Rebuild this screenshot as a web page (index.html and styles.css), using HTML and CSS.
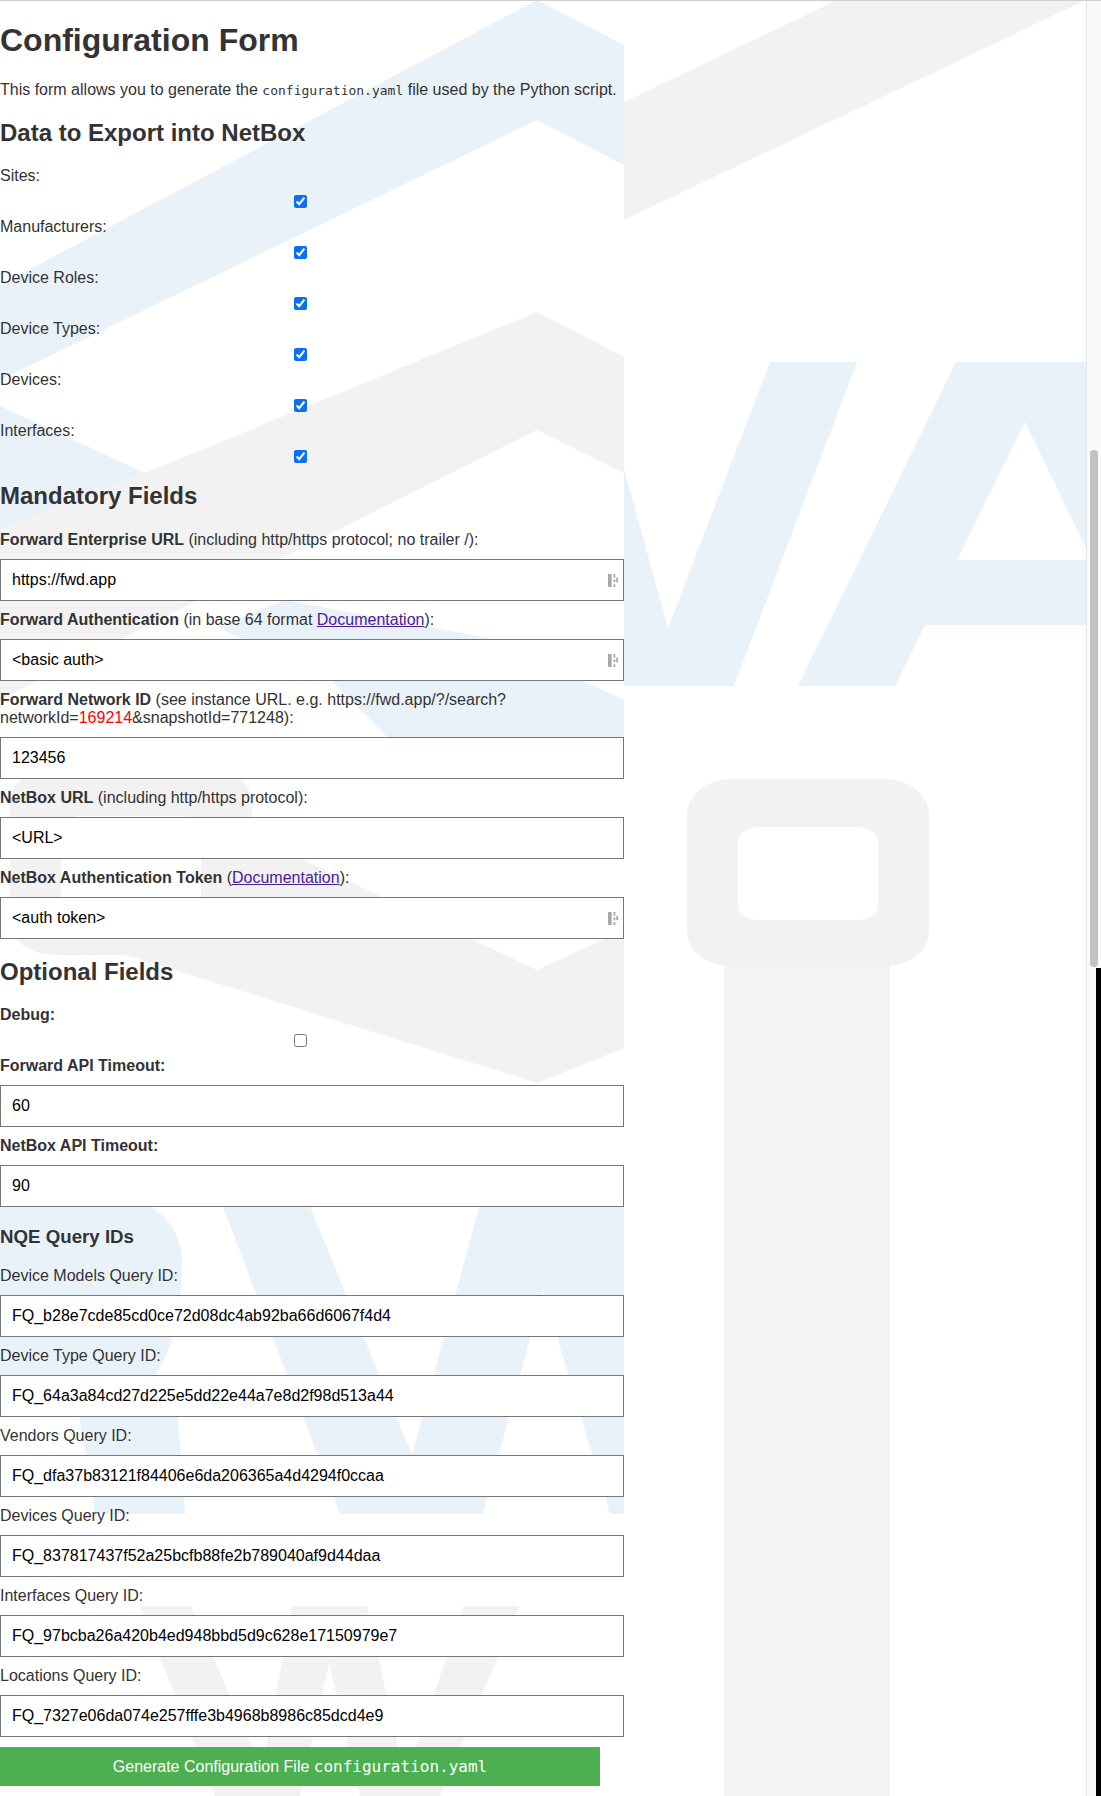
FILE: index.html
```html
<!DOCTYPE html>
<html lang="en">

<head>
    <meta charset="UTF-8" />
    <meta name="viewport" content="width=device-width, initial-scale=1.0" />
    <title>Configuration Form</title>
    <link rel="stylesheet" href="styles.css">
</head>

<body>
    <svg class="watermark" width="1086" height="1796" viewBox="0 0 1086 1796">
        <!-- page background logo -->
        <polygon fill="#f2f2f2" points="624,102 837,0 1086,0 624,220" />
        <polygon fill="#f4f4f4" points="724,960 890,960 890,1796 724,1796" />
        <rect fill="#f2f2f2" x="687" y="779" width="242" height="187" rx="43" ry="35" />
        <rect fill="#fff" x="738" y="827" width="140" height="93" rx="20" ry="15" />
        <g fill="#eaf2f9">
            <polygon points="624,469 668,628 770,362 857,362 734,686 624,686" />
            <path fill-rule="evenodd" d="M956 362 H1086 V625 H925 L895 686 H798 Z M1025 422 L957 560 H1086 V548 Z" />
        </g>
        <!-- form background logo -->
        <g fill="#eaf2f9">
            <polygon points="537,0 624,45 624,165 537,120 0,380 0,285" />
            <polygon points="0,406 145,473 0,530" />
            <polygon points="217,627 285,600 493,639 624,700 624,760 410,760 333,682" />
            <path d="M0 1207 H150 Q182 1225 182 1262 Q182 1335 156 1374 L140 1395 L178 1416 L185 1514 H95 L79 1416 L60 1390 H0 Z" />
            <polygon points="223,1207 310,1207 412,1455 479,1207 624,1207 624,1514 610,1514 543,1290 483,1514 340,1514" />
        </g>
        <g fill="#f2f2f2">
            <polygon points="537,312 624,357 624,473 537,430 0,700 0,530 145,473" />
            <rect x="10" y="768" width="242" height="187" rx="43" ry="35" />
            <polygon points="624,930 537,970 240,830 220,925 110,950 537,1083 624,1048" />
            <polygon points="140,1606 191,1606 262,1770 292,1606 367,1606 405,1779 464,1606 519,1606 440,1796 360,1796 329,1663 300,1796 215,1796" />
        </g>
        <rect fill="#fff" x="61" y="816" width="140" height="93" rx="20" ry="15" />
    </svg>

    <main class="page">
        <h1>Configuration Form</h1>
        <p class="intro">This form allows you to generate the <code>configuration.yaml</code> file used by the Python script.</p>

        <form>
            <h2>Data to Export into NetBox</h2>
            <div class="check-row"><label>Sites:</label><input type="checkbox" checked /></div>
            <div class="check-row"><label>Manufacturers:</label><input type="checkbox" checked /></div>
            <div class="check-row"><label>Device Roles:</label><input type="checkbox" checked /></div>
            <div class="check-row"><label>Device Types:</label><input type="checkbox" checked /></div>
            <div class="check-row"><label>Devices:</label><input type="checkbox" checked /></div>
            <div class="check-row last"><label>Interfaces:</label><input type="checkbox" checked /></div>

            <h2 class="section">Mandatory Fields</h2>
            <label><strong>Forward Enterprise URL</strong> (including http/https protocol; no trailer /):</label>
            <div class="field">
                <input type="text" value="https://fwd.app" />
                <svg class="key" viewBox="0 0 12 16"><path d="M0 1h4v14H0zM6 1h2v4H6zM6 7h2v3H6zM6 12h2v3H6zM9 5h2v5H9z" /></svg>
            </div>
            <label><strong>Forward Authentication</strong> (in base 64 format <a href="#">Documentation</a>):</label>
            <div class="field">
                <input type="text" value="&lt;basic auth&gt;" />
                <svg class="key" viewBox="0 0 12 16"><path d="M0 1h4v14H0zM6 1h2v4H6zM6 7h2v3H6zM6 12h2v3H6zM9 5h2v5H9z" /></svg>
            </div>
            <label><strong>Forward Network ID</strong> (see instance URL. e.g. https://fwd.app/?/search?<br/>networkId=<span class="red">169214</span>&amp;snapshotId=771248):</label>
            <div class="field"><input type="text" value="123456" /></div>
            <label><strong>NetBox URL</strong> (including http/https protocol):</label>
            <div class="field"><input type="text" value="&lt;URL&gt;" /></div>
            <label><strong>NetBox Authentication Token</strong> (<a href="#">Documentation</a>):</label>
            <div class="field">
                <input type="text" value="&lt;auth token&gt;" />
                <svg class="key" viewBox="0 0 12 16"><path d="M0 1h4v14H0zM6 1h2v4H6zM6 7h2v3H6zM6 12h2v3H6zM9 5h2v5H9z" /></svg>
            </div>

            <h2 class="section">Optional Fields</h2>
            <div class="check-row debug"><label><strong>Debug:</strong></label><input type="checkbox" /></div>
            <label><strong>Forward API Timeout:</strong></label>
            <div class="field"><input type="text" value="60" /></div>
            <label><strong>NetBox API Timeout:</strong></label>
            <div class="field"><input type="text" value="90" /></div>

            <h3>NQE Query IDs</h3>
            <label>Device Models Query ID:</label>
            <div class="field"><input type="text" value="FQ_b28e7cde85cd0ce72d08dc4ab92ba66d6067f4d4" /></div>
            <label>Device Type Query ID:</label>
            <div class="field"><input type="text" value="FQ_64a3a84cd27d225e5dd22e44a7e8d2f98d513a44" /></div>
            <label>Vendors Query ID:</label>
            <div class="field"><input type="text" value="FQ_dfa37b83121f84406e6da206365a4d4294f0ccaa" /></div>
            <label>Devices Query ID:</label>
            <div class="field"><input type="text" value="FQ_837817437f52a25bcfb88fe2b789040af9d44daa" /></div>
            <label>Interfaces Query ID:</label>
            <div class="field"><input type="text" value="FQ_97bcba26a420b4ed948bbd5d9c628e17150979e7" /></div>
            <label>Locations Query ID:</label>
            <div class="field"><input type="text" value="FQ_7327e06da074e257fffe3b4968b8986c85dcd4e9" /></div>

            <button type="submit">Generate Configuration File <code>configuration.yaml</code></button>
        </form>
    </main>

    <div class="scrollbar">
        <div class="thumb"></div>
        <div class="thumb-end"></div>
    </div>
</body>

</html>
```
FILE: styles.css
```css
/* Page */

html,
body {
    height: 1796px;
    overflow: hidden;
}

body {
    font-family: "Liberation Sans", Arial, sans-serif;
    background: #fff;
    color: #333;
    margin: 0;
    border-top: 1px solid #d0d0d0;
    box-sizing: border-box;
    position: relative;
}

.watermark {
    position: absolute;
    top: -1px;
    left: 0;
}

.page {
    position: relative;
    width: 624px;
}
/* Headings */

h1 {
    font-size: 32px;
    line-height: 37px;
    margin: 21px 0 0;
}

.intro {
    font-size: 16px;
    line-height: 18px;
    margin: 22px 0 0;
}

code {
    font-family: "DejaVu Sans Mono", monospace;
    font-size: 13px;
}

h2 {
    font-size: 24px;
    line-height: 28px;
    margin: 19px 0 20px;
}

h2.section {
    margin: 19px 0 21px;
}

h3 {
    font-size: 18.7px;
    line-height: 22px;
    margin: 19px 0;
}
/* Form layout */

label {
    display: block;
    font-size: 16px;
    line-height: 18px;
    margin-bottom: 10px;
}

.check-row {
    margin-bottom: 10px;
}

.check-row.last {
    margin-bottom: 0;
}

.check-row.debug {
    margin-top: -1px;
}

.check-row input {
    display: block;
    width: 13px;
    height: 13px;
    margin: 0 0 0 294px;
    accent-color: #0b6ff5;
}

.field {
    position: relative;
    margin-bottom: 10px;
}

input[type="text"] {
    display: block;
    width: 100%;
    height: 42px;
    padding: 0 11px;
    background: #fff;
    border: 1px solid #767676;
    box-sizing: border-box;
    font-family: "Liberation Sans", Arial, sans-serif;
    font-size: 16px;
    color: #000;
}

.key {
    position: absolute;
    right: 5px;
    top: 14px;
    width: 11px;
    height: 15px;
    fill: #a8a8a8;
}

.red {
    color: #f00;
}

a {
    color: #4b1c96;
}
/* Submit button */

button[type="submit"] {
    display: block;
    width: 600px;
    height: 39px;
    margin-top: 1px;
    background: #4caf50;
    color: #fff;
    border: none;
    font-family: "Liberation Sans", Arial, sans-serif;
    font-size: 16px;
}

button code {
    font-size: 16px;
}
/* Scrollbar */

.scrollbar {
    position: absolute;
    top: 0;
    right: 0;
    width: 15px;
    height: 1796px;
    background: #fafafa;
    border-left: 1px solid #e8e8e8;
    box-sizing: border-box;
}

.thumb {
    position: absolute;
    top: 449px;
    left: 3px;
    width: 8px;
    height: 517px;
    background: #c2c2c2;
    border-radius: 4px;
}

.thumb-end {
    position: absolute;
    top: 967px;
    right: 0;
    width: 5px;
    height: 829px;
    background: #000;
}
```
